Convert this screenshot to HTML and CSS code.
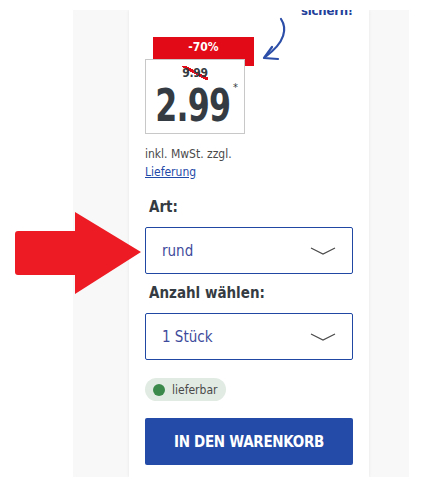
FILE: index.html
```html
<!DOCTYPE html>
<html lang="de">
<head>
	<meta charset="utf-8">
	<title>Produkt</title>
	<link rel="stylesheet" href="styles.css">
</head>
<body>
	<div class="stage">
		<div class="panel">
			<div class="column">
				<div class="promo-line">sichern!</div>

				<div class="price-block">
					<div class="badge">-70%</div>
					<div class="price-box">
						<div class="old-price">9.99</div>
						<div class="price"><span class="amount">2.99</span><span class="star">*</span></div>
					</div>
				</div>

				<p class="tax">inkl. MwSt. zzgl.<br><a href="#">Lieferung</a></p>

				<label class="field-label">Art:</label>
				<div class="select">
					<span>rund</span>
					<svg class="chevron" width="26" height="8" viewBox="0 0 26 8"><polyline points="1,1 13,7 25,1" fill="none" stroke="#4a4a4a" stroke-width="1.2"/></svg>
				</div>

				<label class="field-label">Anzahl wählen:</label>
				<div class="select">
					<span>1 Stück</span>
					<svg class="chevron" width="26" height="8" viewBox="0 0 26 8"><polyline points="1,1 13,7 25,1" fill="none" stroke="#4a4a4a" stroke-width="1.2"/></svg>
				</div>

				<div class="stock"><span class="dot"></span>lieferbar</div>

				<button class="cart-btn">IN DEN WARENKORB</button>
			</div>
		</div>

		<!-- annotations drawn over the page -->
		<svg class="red-arrow" width="130" height="84" viewBox="0 0 130 84">
			<path d="M3 19 H60 V0 L126 40 L60 82 V63 H3 Q0 63 0 60 V22 Q0 19 3 19 Z" fill="#ed1c24"/>
		</svg>
		<svg class="blue-arrow" width="34" height="44" viewBox="0 0 34 44">
			<path d="M21 2 C27 11 26 25 5 40" fill="none" stroke="#2c4ea8" stroke-width="2.2" stroke-linecap="round"/>
			<path d="M12 30 L4 41 L18 42" fill="none" stroke="#2c4ea8" stroke-width="2.2" stroke-linecap="round" stroke-linejoin="round"/>
		</svg>
	</div>
</body>
</html>
```

FILE: styles.css
```css
body {
	margin: 0;
	background-color: #ffffff;
	font-family: "DejaVu Sans Condensed", "Liberation Sans Narrow", "Liberation Sans", sans-serif;
	color: #353b42;
}

.stage {
	position: relative;
	width: 432px;
	height: 487px;
	padding: 10px 23px 10px 73px;
	box-sizing: border-box;
}

.panel {
	height: 467px;
	background-color: #f8f8f8;
	padding-left: 56px;
	padding-right: 40px;
	overflow: hidden;
}

.column {
	height: 100%;
	background-color: #ffffff;
	padding: 0 16px;
	box-shadow: 0 0 3px rgba(0, 0, 0, 0.08);
	display: flex;
	flex-direction: column;
	align-items: flex-start;
}

.promo-line {
	align-self: flex-end;
	margin-top: -7px;
	font-size: 13px;
	font-weight: bold;
	line-height: 16px;
	letter-spacing: -0.2px;
	color: #23409a;
}

.price-block {
	margin-top: 18px;
}

.badge {
	margin-left: 8px;
	width: 101px;
	height: 29px;
	background-color: #e20a16;
	color: #ffffff;
	font-size: 12px;
	font-weight: bold;
	text-align: center;
	line-height: 20px;
}

.price-box {
	position: relative;
	margin-top: -7px;
	width: 100px;
	height: 75px;
	box-sizing: border-box;
	border: 1px solid #c8c8c8;
	background-color: #ffffff;
	text-align: center;
}

.old-price {
	display: inline-block;
	margin-top: 6px;
	font-size: 12px;
	font-weight: bold;
	line-height: 14px;
	letter-spacing: -0.3px;
	background: linear-gradient(to top right, transparent 46%, #e20a16 46%, #e20a16 58%, transparent 58%);
}

.price {
	margin-top: 4px;
	position: relative;
	height: 42px;
}

.amount {
	display: inline-block;
	font-size: 44px;
	font-weight: bold;
	line-height: 42px;
	letter-spacing: -1px;
	transform: scaleX(0.8);
	position: relative;
	left: -2px;
}

.star {
	position: absolute;
	left: 87px;
	top: -3px;
	font-size: 11px;
	line-height: 12px;
}

.tax {
	margin: 11px 0 0;
	font-size: 12px;
	line-height: 18px;
	color: #4a4a4a;
}

.tax a {
	color: #1f4aa8;
}

.field-label {
	margin: 16px 0 0 4px;
	font-size: 15px;
	font-weight: bold;
	line-height: 20px;
}

.select + .field-label {
	margin-top: 9px;
}

.select {
	margin-top: 10px;
	width: 208px;
	height: 47px;
	box-sizing: border-box;
	border: 1px solid #2149a4;
	border-radius: 2px;
	padding: 0 16px 0 16px;
	display: flex;
	align-items: center;
	justify-content: space-between;
	font-size: 15px;
	color: #3e4b9c;
}

.stock {
	margin-top: 18px;
	height: 23px;
	padding: 0 9px 0 8px;
	border-radius: 12px;
	background-color: #e1ebe3;
	display: flex;
	align-items: center;
	gap: 7px;
	font-size: 12px;
	color: #4a4a4a;
}

.dot {
	width: 12px;
	height: 12px;
	border-radius: 50%;
	background-color: #3b8a4c;
}

.cart-btn {
	margin-top: 17px;
	width: 208px;
	height: 47px;
	border: none;
	border-radius: 2px;
	background-color: #234ba7;
	color: #ffffff;
	font-family: inherit;
	font-size: 15px;
	font-weight: bold;
	letter-spacing: -0.3px;
}

.red-arrow {
	position: absolute;
	left: 15px;
	top: 212px;
}

.blue-arrow {
	position: absolute;
	left: 260px;
	top: 17px;
}
```
